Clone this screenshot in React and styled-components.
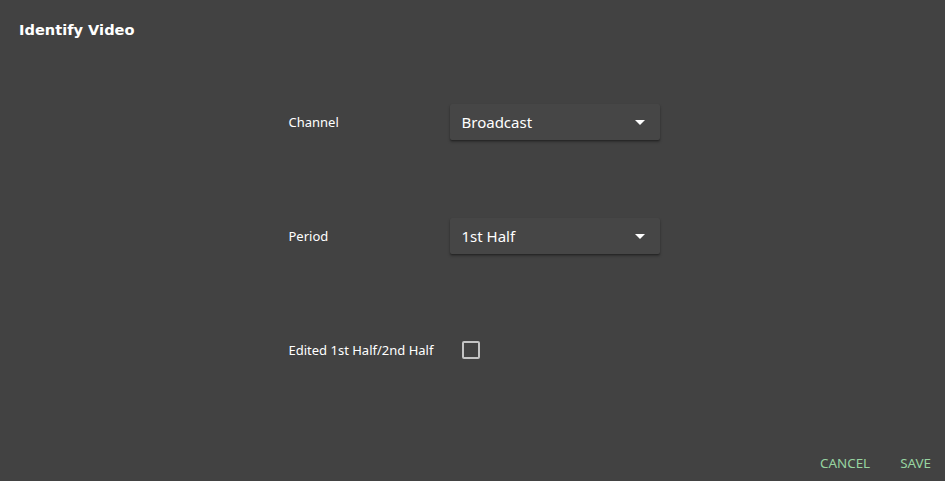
import React, { useState } from 'react';
import styled, { createGlobalStyle } from 'styled-components';

const GlobalStyle = createGlobalStyle`
  html, body {
    margin: 0;
    padding: 0;
    background: #424242;
  }
  #root {
    height: 100vh;
  }
`;

const Dialog = styled.div`
  height: 100vh;
  display: flex;
  flex-direction: column;
  background: #424242;
  color: #fff;
  font-family: 'Noto Sans', sans-serif;
  box-sizing: border-box;
`;

const Header = styled.div`
  padding: 20px 19px 0;
`;

const Title = styled.h2`
  margin: 0;
  font-family: 'DejaVu Sans', sans-serif;
  font-weight: bold;
  font-size: 14.6px;
  line-height: 20px;
  color: #fff;
`;

const Form = styled.div`
  flex: 1;
  display: grid;
  grid-template-columns: 161px 210px;
  grid-auto-rows: 36px;
  row-gap: 78px;
  justify-content: center;
  align-content: start;
  padding-top: 64px;
  padding-left: 3px;
`;

const Label = styled.div`
  display: flex;
  align-items: center;
  font-size: 13px;
  color: #fff;
`;

const Field = styled.div`
  display: flex;
  align-items: center;
`;

const SelectBox = styled.div`
  width: 100%;
  height: 36px;
  box-sizing: border-box;
  display: flex;
  align-items: center;
  justify-content: space-between;
  padding: 0 15px 0 12px;
  background: #464646;
  border-radius: 2px;
  box-shadow: 0 2px 3px rgba(0, 0, 0, 0.3), 0 1px 1px rgba(0, 0, 0, 0.2);
  font-size: 15px;
  color: #fff;
  cursor: pointer;
`;

const Arrow = styled.svg`
  width: 10px;
  height: 5px;
  fill: #fff;
`;

const Check = styled.button`
  width: 18px;
  height: 18px;
  margin-left: 12px;
  padding: 0;
  box-sizing: border-box;
  border: 2px solid #c4c4c4;
  border-radius: 2px;
  background: ${p => (p.checked ? '#c4c4c4' : 'transparent')};
  cursor: pointer;
`;

const Footer = styled.div`
  display: flex;
  justify-content: flex-end;
  gap: 14px;
  padding: 0 6px 0 0;
`;

const TextButton = styled.button`
  border: none;
  background: none;
  padding: 6px 8px;
  font-family: 'Noto Sans', sans-serif;
  font-size: 13.4px;
  line-height: 24px;
  text-transform: uppercase;
  color: #97d4a0;
  cursor: pointer;
`;

const Select = ({ value }) => (
  <SelectBox>
    <span>{value}</span>
    <Arrow viewBox="0 0 10 5">
      <path d="M0 0 L10 0 L5 5 Z" />
    </Arrow>
  </SelectBox>
);

export default function App() {
  const [edited, setEdited] = useState(false);

  return (
    <Dialog>
      <GlobalStyle />
      <Header>
        <Title>Identify Video</Title>
      </Header>
      <Form>
        <Label>Channel</Label>
        <Field>
          <Select value="Broadcast" />
        </Field>
        <Label>Period</Label>
        <Field>
          <Select value="1st Half" />
        </Field>
        <Label>Edited 1st Half/2nd Half</Label>
        <Field>
          <Check checked={edited} onClick={() => setEdited(!edited)} />
        </Field>
      </Form>
      <Footer>
        <TextButton>Cancel</TextButton>
        <TextButton>Save</TextButton>
      </Footer>
    </Dialog>
  );
}
